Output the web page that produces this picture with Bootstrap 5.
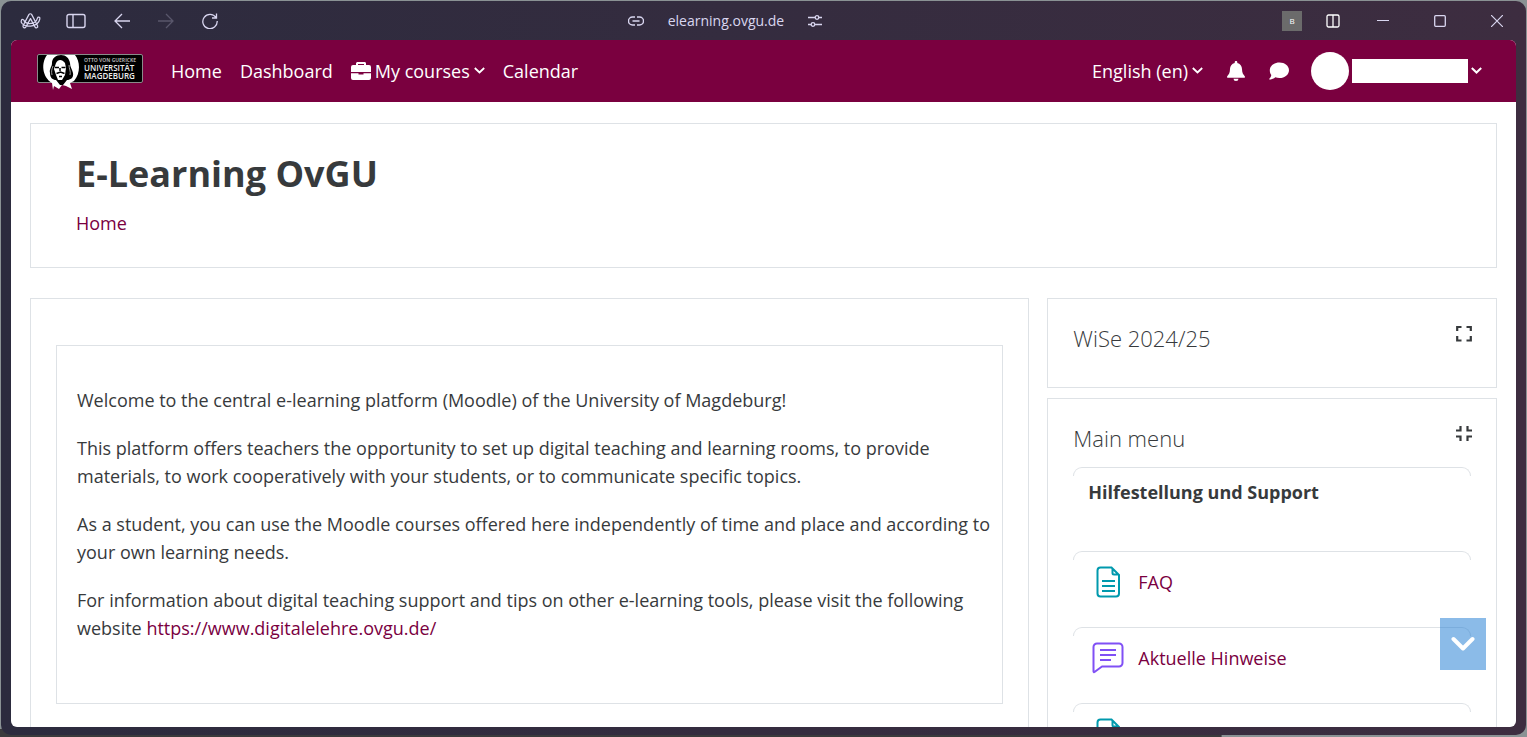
<!DOCTYPE html>
<html lang="en">
<head>
<meta charset="utf-8">
<meta name="viewport" content="width=device-width, initial-scale=1">
<title>E-Learning OvGU</title>
<link href="https://cdn.jsdelivr.net/npm/bootstrap@5.3.0/dist/css/bootstrap.min.css" rel="stylesheet">
<style>
  :root { --ovgu: #7a003f; --ink: #373a3c; --line: #dee2e6; }
  body { font-family: "Open Sans", "Noto Sans", sans-serif; font-size: 18px; line-height: 28px; color: var(--ink); background: linear-gradient(#3a3a3c, #3a3a3c) left bottom / 80% 8px no-repeat #8a9294; overflow: hidden; }
  a { color: var(--ovgu); text-decoration: none; }
  a:hover { color: var(--ovgu); text-decoration: underline; }
  svg { display: block; flex: none; }
  .browser { height: calc(100vh - 3px); margin: 1px 1px 2px; padding: 0 10px 8px; border-radius: 10px; background: linear-gradient(90deg, #2c2b3e, #3d2d40); }
  .titlebar { flex: none; height: 39px; color: #d9d6f0; font-size: 14px; line-height: 24px; display: grid; grid-template-columns: 8fr auto 9fr; }
  .titlebar button { padding: 0; border: 0; background: none; color: inherit; }
  .window-tools { padding-right: 13px; }
  .browser-tools { gap: 28px; padding-left: 9px; }
  .menu-buttons { gap: 25px; }
  .caption-buttons { gap: 45px; margin-left: 37px; }
  .titlebar .profile-tag { width: 20px; height: 20px; background: #6b6b6b; color: #fff; font-size: 8px; line-height: 20px; }
  .viewport { min-height: 0; background: #fff; border-radius: 6px; overflow: hidden; }
  .topnav { height: 62px; background: var(--ovgu); padding: 0 34px 1px 26px; }
  .topnav, .topnav a, .topnav button { color: #fff; }
  .topnav button { border: 0; padding: 0; background: none; }
  .main-links { gap: 18px; margin-left: 27px; }
  .topnav .user-menu { gap: 3px; margin-left: 22px; }
  .avatar { width: 38px; height: 38px; background: #fff; }
  .username { width: 116px; height: 24px; background: #fff; }
  .page-body { padding: 21px 19px 0; }
  .panel { border: 1px solid var(--line); background: #fff; }
  .page-head { height: 145px; padding: 26px 45px; }
  .page-head h1 { font-size: 36px; line-height: 48px; font-weight: 700; margin: 0 0 11px; }
  .columns { display: grid; grid-template-columns: 20fr 9fr; gap: 18px; margin-top: 30px; }
  .content-col { padding: 46px 25px 60px; }
  .welcome { padding: 40px 8px 61px 20px; }
  .welcome p { margin-bottom: 20px; }
  .side-col { gap: 10px; }
  .block { padding: 25px 24px 25px 25px; }
  .block h2 { font-size: 22px; line-height: 28px; font-weight: 300; margin: 0; }
  .block-wise { height: 90px; }
  .block-title { margin-bottom: 15px; }
  .entry { height: 76px; margin-right: 1px; padding: 15px 19px; gap: 14px; line-height: 32px; position: relative; }
  .entry::before { content: ""; position: absolute; inset: 0 0 auto; height: 9px; border: 1px solid var(--line); border-bottom: 0; border-radius: 9px 9px 0 0; }
  .entry.section-name { height: 84px; padding: 9px 15px; }
  .to-end { position: fixed; right: 41px; bottom: 67px; width: 46px; height: 52px; border: 0; background: rgba(24, 119, 210, .5); color: #fff; }
  .logo-small { font: 700 5px "Open Sans", sans-serif; }
  .logo-big { font: 600 8px "Open Sans", sans-serif; }
</style>
</head>
<body>
<div class="browser d-flex flex-column">
  <header class="titlebar align-items-center">
    <div class="browser-tools d-flex align-items-center">
      <div class="menu-buttons d-flex align-items-center">
        <button type="button" aria-label="Browser menu"><svg width="21" height="18" viewBox="0 0 22 18" fill="none" stroke="currentColor" stroke-width="1.300" stroke-linejoin="round"><path d="M3.200 14 9.300 2.300c.7-1.200 2.300-1.200 3 0l6.200 12c.5 1.700-2 2.700-2.800 1L11 6.500 6 15.500c-1 1.500-3.400.2-2.800-1.500zM1.500 8.300c.5-1.500 2.500-1 2.800.5 2.500 4.200 12 4.200 14-2.800.5-1.700 2.900-1.200 2.500.7C19 16 3.500 16.500 1.200 10z"/></svg></button>
        <button type="button" aria-label="Sidebar"><svg width="20" height="16" viewBox="0 0 20 16" fill="none" stroke="currentColor" stroke-width="1.400"><rect x="1" y="1.500" width="18" height="13" rx="2"/><path d="M7 1.500v13"/></svg></button>
      </div>
      <button type="button" aria-label="Back"><svg width="16" height="16" viewBox="0 0 16 16" fill="none" stroke="currentColor" stroke-width="1.300"><path d="M16 8H1M8 1 1 8l7 7"/></svg></button>
      <button type="button" class="opacity-25" aria-label="Forward"><svg width="16" height="16" viewBox="0 0 16 16" fill="none" stroke="currentColor" stroke-width="1.300"><path d="M0 8h15M8 1l7 7-7 7"/></svg></button>
      <button type="button" aria-label="Reload"><svg width="16" height="16" viewBox="0 0 16 16" fill="none" stroke="currentColor" stroke-width="1.300"><path d="M14 4.500A7.200 7.200 0 1 0 15.200 8M14.500.5v4.500H10"/></svg></button>
    </div>
    <div class="d-flex align-items-center">
      <svg class="me-4" width="16" height="10" viewBox="0 0 16 10" fill="none" stroke="currentColor" stroke-width="1.400"><path d="M7 1H4.500a4 4 0 0 0 0 8H7M9 1h2.500a4 4 0 0 1 0 8H9M4.500 5h7"/></svg>
      <span>elearning.ovgu.de</span>
      <svg class="ms-4" width="14" height="12" viewBox="0 0 14 12" fill="none" stroke="currentColor" stroke-width="1.300"><path d="M0 2.500h7M11 2.500h3M0 9.500h3M7 9.500h7"/><circle cx="9" cy="2.500" r="1.800"/><circle cx="5" cy="9.500" r="1.800"/></svg>
    </div>
    <div class="window-tools d-flex align-items-center justify-content-end">
      <button type="button" class="profile-tag">B</button>
      <button type="button" class="ms-4" aria-label="Split view"><svg width="14" height="14" viewBox="0 0 14 14" fill="none" stroke="#fff" stroke-width="1.300"><rect x="1" y="1" width="12" height="12" rx="1.500"/><path d="M7 1v12"/></svg></button>
      <div class="caption-buttons d-flex align-items-center">
        <button type="button" aria-label="Minimise"><svg width="12" height="12" viewBox="0 0 12 12" stroke="currentColor"><path d="M0 5.500h12"/></svg></button>
        <button type="button" aria-label="Maximise"><svg width="12" height="12" viewBox="0 0 12 12" fill="none" stroke="currentColor" stroke-width="1.300"><rect x=".7" y=".7" width="10.600" height="10.600" rx="1"/></svg></button>
        <button type="button" aria-label="Close"><svg width="12" height="12" viewBox="0 0 12 12" stroke="currentColor" stroke-width="1.200"><path d="m0 0 12 12M12 0 0 12"/></svg></button>
      </div>
    </div>
  </header>

  <div class="viewport flex-grow-1">
    <nav class="topnav d-flex align-items-center" aria-label="Site">
      <a href="#" aria-label="Otto von Guericke Universität Magdeburg">
        <svg width="107" height="38" viewBox="0 0 107 38">
          <rect x=".5" y="2.500" width="105" height="28" rx="1.500" fill="#000" stroke="#8a8a8a"/>
          <path d="M10 3h28c5 6 6 18-1 26l-4 2 2 6-6-3-4-1-3 4-5-3-1 4-1-7c-10-6-11-20-5-28z" fill="#fff"/>
          <path d="M24 3c-5 0-9 3-9 8 0 4-3 6-2 10 0 5 3 7 6 7l4 5h3l4-5c3 0 7-2 6-7-1-4-3-6-3-10-1-5-4-8-9-8z" fill="#000"/>
          <path d="M19 11c2-4 6-4 9 0l1 5-1 7-3 5h-4l-2-5-2-6z" fill="#fff"/>
          <path d="M18 15.500h4M24.500 15.500h4M19.500 21.500l4-1.500 4 1.500M22 24.500h3M23 16v3" stroke="#000" stroke-width="1.500" fill="none"/>
          <path d="M16 14c-1 3-2 5-1 9M32 13c0 4 2 6 1 10" stroke="#999" fill="none"/>
          <text class="logo-small" x="47" y="10" fill="#aaa">OTTO VON GUERICKE</text>
          <text class="logo-big" x="47" y="19" fill="#eee">UNIVERSITÄT</text>
          <text class="logo-big" x="47" y="27" fill="#eee">MAGDEBURG</text>
        </svg>
      </a>
      <div class="main-links d-flex align-items-center">
        <a href="#">Home</a>
        <a href="#">Dashboard</a>
        <button type="button" class="d-flex align-items-center gap-1">
          <svg width="20" height="20" viewBox="0 0 20 20" fill="#fff"><path fill-rule="evenodd" d="M5 4V2.500C5 1.500 6 1 6.500 1h7c1 0 1.500.7 1.500 1.500V4h3a2 2 0 0 1 2 2v5H0V6a2 2 0 0 1 2-2zM7 4h6V3H7zM0 12.200h7.500v1.300h5v-1.300H20V17a2 2 0 0 1-2 2H2a2 2 0 0 1-2-2z"/></svg>
          My courses
          <svg width="11" height="7" viewBox="0 0 11 7" fill="none" stroke="#fff" stroke-width="1.800"><path d="m.8 1 4.700 4.500L10.200 1"/></svg>
        </button>
        <a href="#">Calendar</a>
      </div>
      <div class="d-flex align-items-center ms-auto">
        <button type="button" class="d-flex align-items-center gap-1">English (en)
          <svg width="11" height="7" viewBox="0 0 11 7" fill="none" stroke="#fff" stroke-width="1.800"><path d="m.8 1 4.700 4.500L10.200 1"/></svg></button>
        <button type="button" class="ms-4" aria-label="Notifications"><svg width="18" height="20" viewBox="0 0 18 20" fill="#fff"><path d="M9 0c.8 0 1.300.5 1.300 1.300v.6C13.200 2.500 15 5 15 8c0 4 1.300 5.500 2.600 7 .8 1 .2 1.800-.8 1.800H1.200C.2 16.800-.4 16 .4 15 1.700 13.500 3 12 3 8c0-3 1.800-5.500 4.700-6.100v-.6C7.700.5 8.200 0 9 0zM6.500 17.800h5a2.500 2.200 0 0 1-5 0z"/></svg></button>
        <button type="button" class="ms-4" aria-label="Messages"><svg width="20" height="18" viewBox="0 0 20 18" fill="#fff"><path d="M10.500.5C15.700.5 20 3.800 20 8.200s-4.300 7.800-9.500 7.800c-1.500 0-3-.3-4.200-.8C4.700 16.700 2.700 17.500.5 17.500c-.4 0-.5-.5-.2-.8 1-1 1.900-2.500 2-3.800C1.200 11.600.8 10 .8 8.200.8 3.800 5.200.5 10.500.5z"/></svg></button>
        <button type="button" class="user-menu d-flex align-items-center" aria-label="User menu">
          <span class="avatar rounded-circle"></span><span class="username"></span>
          <svg width="11" height="7" viewBox="0 0 11 7" fill="none" stroke="#fff" stroke-width="2"><path d="m.8 1 4.700 4.500L10.200 1"/></svg>
        </button>
      </div>
    </nav>

    <main class="page-body">
      <section class="panel page-head">
        <h1>E-Learning OvGU</h1>
        <a href="#">Home</a>
      </section>
      <div class="columns">
        <section class="panel content-col">
          <div class="panel welcome">
            <p>Welcome to the central e-learning platform (Moodle) of the University of Magdeburg!</p>
            <p>This platform offers teachers the opportunity to set up digital teaching and learning rooms, to provide materials, to work cooperatively with your students, or to communicate specific topics.</p>
            <p>As a student, you can use the Moodle courses offered here independently of time and place and according to your own learning needs.</p>
            <p class="mb-0">For information about digital teaching support and tips on other e-learning tools, please visit the following website <a href="#">https://www.digitalelehre.ovgu.de/</a></p>
          </div>
        </section>
        <aside class="side-col d-flex flex-column">
          <section class="panel block block-wise d-flex justify-content-between align-items-start">
            <h2>WiSe 2024/25</h2>
            <button type="button" class="btn p-0 border-0" aria-label="Expand"><svg width="16" height="18" viewBox="0 0 16 18" fill="none" stroke="#373a3c" stroke-width="2.200"><path d="M1.200 7V3H5.500M10.500 3h4.300v4M14.800 12v4.500H10.500M5.500 16.500H1.200V12"/></svg></button>
          </section>
          <section class="panel block">
            <div class="block-title d-flex justify-content-between align-items-start">
              <h2>Main menu</h2>
              <button type="button" class="btn p-0 border-0" aria-label="Collapse"><svg width="16" height="18" viewBox="0 0 16 18" fill="none" stroke="#373a3c" stroke-width="2.200"><path d="M0 6.500h4.500V2M11.500 2v4.500H16M16 12.500h-4.500V17M4.500 17v-4.500H0"/></svg></button>
            </div>
            <div class="entry section-name fw-bold">Hilfestellung und Support</div>
            <div class="entry d-flex align-items-start">
              <svg width="32" height="32" viewBox="0 0 32 32" fill="none" stroke="#0099ad" stroke-width="2"><path d="M8.500 1.500h11l7.500 7.500v18.500a3 3 0 0 1-3 3H8.500a3 3 0 0 1-3-3v-23a3 3 0 0 1 3-3zM20.500 2.500V7a1.500 1.500 0 0 0 1.500 1.500H27M10 15h13M10 20h13M10 25h13"/></svg>
              <a href="#">FAQ</a>
            </div>
            <div class="entry d-flex align-items-start">
              <svg width="32" height="32" viewBox="0 0 32 32" fill="none" stroke="#8050f5" stroke-width="2"><path stroke-linejoin="round" d="M5 1.500h22a3.500 3.500 0 0 1 3.500 3.500v16a3.500 3.500 0 0 1-3.500 3.500H10L2.500 30c-.5.300-1 0-1-.5V5A3.500 3.500 0 0 1 5 1.500z"/><path d="M8 8h16M8 13h16M8 18h11"/></svg>
              <a href="#">Aktuelle Hinweise</a>
            </div>
            <div class="entry d-flex align-items-start">
              <svg width="32" height="32" viewBox="0 0 32 32" fill="none" stroke="#0099ad" stroke-width="2"><path d="M8.500 1.500h11l7.500 7.500v18.500a3 3 0 0 1-3 3H8.500a3 3 0 0 1-3-3v-23a3 3 0 0 1 3-3zM20.500 2.500V7a1.500 1.500 0 0 0 1.500 1.500H27M10 15h13M10 20h13M10 25h13"/></svg>
            </div>
          </section>
        </aside>
      </div>
    </main>
  </div>
</div>
<button type="button" class="to-end d-flex align-items-center justify-content-center p-0" aria-label="Scroll to the bottom"><svg width="24" height="16" viewBox="0 0 24 16" fill="none" stroke="#fff" stroke-width="4" stroke-linecap="round" stroke-linejoin="round"><path d="m2.500 3 9.500 9.500L21.500 3"/></svg></button>
<script src="https://cdn.jsdelivr.net/npm/bootstrap@5.3.0/dist/js/bootstrap.bundle.min.js"></script>
</body>
</html>
